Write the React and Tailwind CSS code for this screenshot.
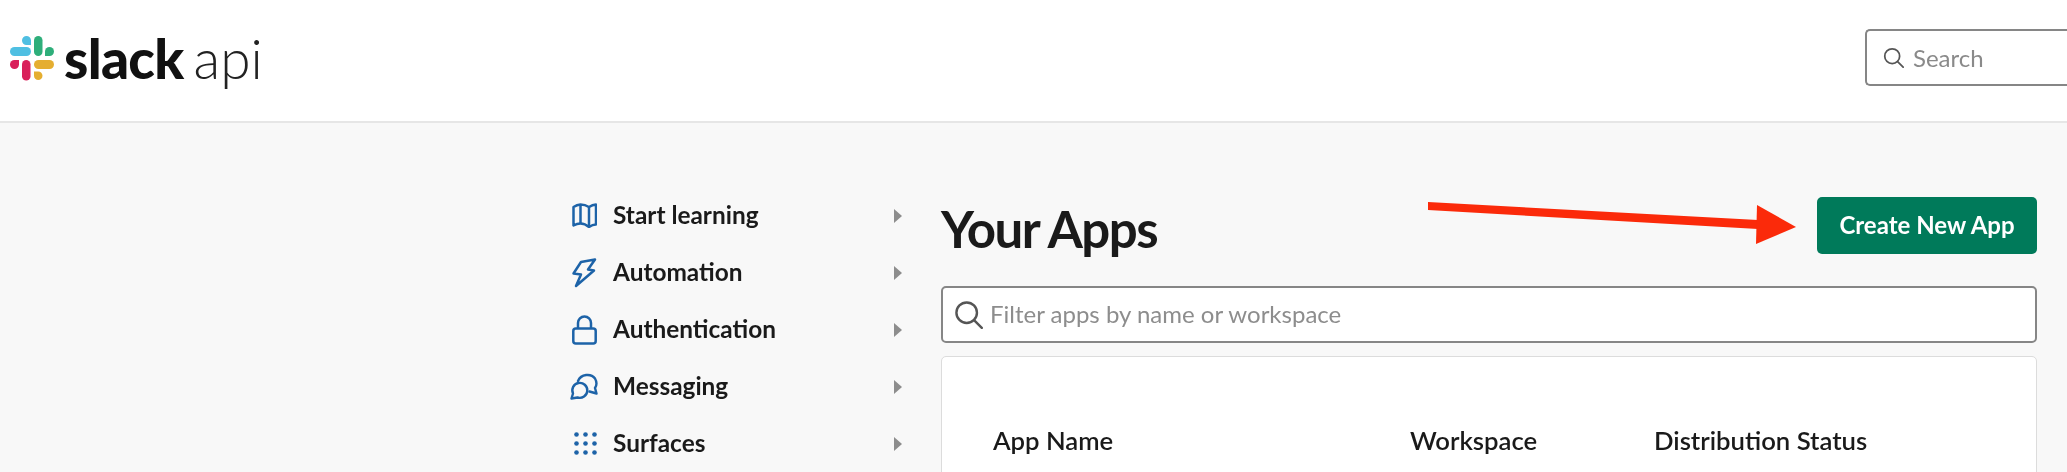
import React from "react";

const Logo = () => (
  <svg width="44" height="45" viewBox="0 0 44 45" className="shrink-0">
    <g fill="#4fbfe2">
      <rect x="0" y="11" width="21" height="9" rx="4.500" />
      <path d="M21 9h-4.500a4.500 4.500 0 1 1 4.500-4.500z" />
    </g>
    <g fill="#2eae7a">
      <rect x="24" y="0" width="8.500" height="20" rx="4.250" />
      <path d="M35 20v-4.500a4.500 4.500 0 1 1 4.500 4.500z" />
    </g>
    <g fill="#d9205a">
      <rect x="12" y="24" width="8.500" height="20.500" rx="4.250" />
      <path d="M9 24v4.500a4.500 4.500 0 1 1-4.500-4.500z" />
    </g>
    <g fill="#e5ae30">
      <rect x="24" y="24" width="20" height="9" rx="4.500" />
      <path d="M24 35.500h4.250a4.250 4.250 0 1 1-4.250 4.250z" />
    </g>
  </svg>
);

const Map = () => (
  <svg width="25" height="25" viewBox="0 0 25 25" fill="none" stroke="#1d63a8" strokeWidth="2.500" strokeLinejoin="round">
    <path d="M1.500 4Q5 1.800 8.500 1.500Q13 1.500 17 4Q20.500 1.800 24 1.500V21.500Q20.500 21.500 17 24Q13 20.500 8.500 20.500Q5 20.500 1.500 22.500Z" />
    <path d="M8.500 1.500V20.500M17 4V24" />
  </svg>
);
const Bolt = () => (
  <svg width="25" height="30" viewBox="0 0 25 30" fill="none" stroke="#1d63a8" strokeWidth="2.500" strokeLinejoin="round">
    <path d="M9 4L23 1.500 16 11.500 22 12.500 4 28 9 16.500 1.500 15.500z" />
  </svg>
);
const Lock = () => (
  <svg width="25" height="30" viewBox="0 0 25 30" fill="none" stroke="#1d63a8" strokeWidth="2.500" strokeLinejoin="round">
    <rect x="1.300" y="13.500" width="22.400" height="15" rx="2.500" />
    <path d="M6 13.500V8a6.500 6.500 0 0 1 13 0V13.500" />
  </svg>
);
const Chat = () => (
  <svg width="29" height="27" viewBox="0 0 29 27" fill="none" stroke="#1d63a8" strokeWidth="2.400" strokeLinejoin="round" strokeLinecap="round" className="-ml-[2px]">
    <path d="M8 8C11 1 21 0 25 5.500C27 9 27 12 25 15L26.500 20.500L19.500 18.500" />
    <path d="M1.500 25.500L3 20.500A7.500 7.500 0 1 1 7.500 24.500Z" />
  </svg>
);
const Dots = () => (
  <svg width="23" height="23" viewBox="0 0 23 23" fill="#1d63a8" className="ml-[2px]">
    {[2.500, 11.500, 20.500].map((y) => [2.500, 11.500, 20.500].map((x) => <circle key={`${x}-${y}`} cx={x} cy={y} r="2.300" />))}
  </svg>
);

const nav = [
  ["Start learning", Map],
  ["Automation", Bolt],
  ["Authentication", Lock],
  ["Messaging", Chat],
  ["Surfaces", Dots],
];

const Search = ({ size, stroke }) => (
  <svg width={size} height={size} viewBox="0 0 24 24" fill="none" stroke={stroke} strokeWidth="2" strokeLinecap="round" className="shrink-0">
    <circle cx="10.500" cy="10.500" r="8.500" />
    <path d="M17 17l6 6" />
  </svg>
);

export default function App() {
  return (
    <div className="relative h-[472px] w-[2067px] overflow-hidden bg-[#f8f8f8] font-['Lato','Liberation_Sans',sans-serif] text-[#1d1c1d] blur-[0.4px]">
      <header className="flex h-[123px] items-center justify-between border-b-2 border-[#e6e6e6] bg-white pb-[6px] pl-[10px]">
        <div className="flex items-center pt-[2px]">
          <Logo />
          <span className="ml-[10px] text-[55px] leading-none font-black tracking-[-0.700px] text-[#111]">slack</span>
          <span className="ml-[10px] text-[55px] leading-none font-light text-[#222]">api</span>
        </div>
        <div className="flex h-[57px] w-[202px] items-center gap-[9px] rounded-l-[5px] border-y-2 border-l-2 border-[#868686] bg-white pl-[16px]">
          <Search size={21} stroke="#555" />
          <span className="text-[24px] text-[#8a8a8a]">Search</span>
        </div>
      </header>

      <div className="flex pl-[572px]">
        <nav className="w-[369px] pt-[64px]">
          {nav.map(([label, Icon]) => (
            <div key={label} className="flex h-[57px] items-center">
              <span className="flex w-[41px] shrink-0 justify-start">
                <Icon />
              </span>
              <span className="w-[281px] text-[24.400px] font-bold text-[#1a1a1a]">{label}</span>
              <span className="h-0 w-0 border-y-[7px] border-l-[8px] border-y-transparent border-l-[#8d8d8d]" />
            </div>
          ))}
        </nav>

        <main className="w-[1096px] pt-[74px]">
          <div className="flex h-[57px] items-center justify-between">
            <h1 className="pt-[6px] text-[51px] leading-none font-bold tracking-[-1.500px] text-[#1a1a1a]">Your Apps</h1>
            <button className="flex h-[57px] w-[220px] items-center justify-center rounded-[5px] bg-[#007a5a] pb-[1px] text-[24px] font-bold text-white">
              Create New App
            </button>
          </div>

          <div className="mt-[32px] flex h-[57px] items-center gap-[7px] rounded-[5px] border-2 border-[#868686] bg-white pb-[1px] pl-[11px]">
            <Search size={29} stroke="#555" />
            <span className="text-[24px] text-[#8d8d8d]">Filter apps by name or workspace</span>
          </div>

          <div className="mt-[13px] h-[200px] rounded-t-[5px] border border-[#dcdcdc] bg-white pt-[64px] pl-[51px]">
            <div className="flex text-[25.700px] font-semibold text-[#1a1a1a]">
              <span className="w-[417px]">App Name</span>
              <span className="w-[244px]">Workspace</span>
              <span>Distribution Status</span>
            </div>
          </div>
        </main>
      </div>

      <svg className="absolute top-[195px] left-[1420px]" width="385" height="55" viewBox="0 0 385 55">
        <path d="M8 7L338 25 338 34 8 15z" fill="#fb2a0a" />
        <path d="M337 10L376 32 336 49z" fill="#fb2a0a" />
      </svg>
    </div>
  );
}
